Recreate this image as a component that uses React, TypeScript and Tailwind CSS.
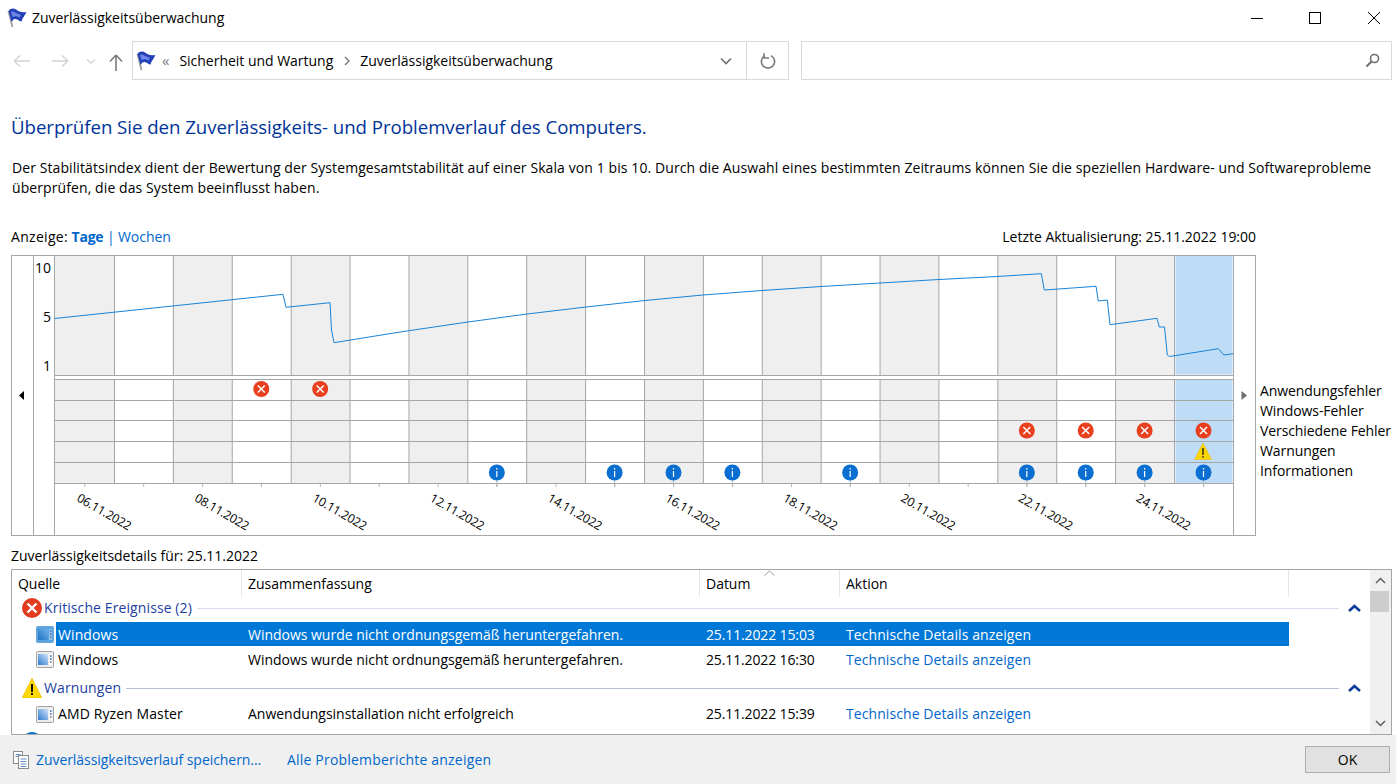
const font = "font-['Open_Sans','Liberation_Sans',sans-serif]";

const columnX = (i: number) => 55.6 + 58.89 * i;
const columns = Array.from({ length: 20 }, (_, i) => i);
const rowLines = [379.5, 400.5, 420.5, 441.5, 462.5, 483.5];
const dates = ["06", "08", "10", "12", "14", "16", "18", "20", "22", "24"];

const stability =
  "54.5,318.5 283,294.3 286,307.3 330,302.7 331.5,330 334,342.7 400,332 468,322 527,314 586,307 645,300.5 703,295 762,290.5 821,286.5 880,283 939,279.5 997,276.5 1041.3,273.7 1044.3,290 1096,286.3 1098.3,301 1107.3,300 1110,324.7 1157,318.3 1159.3,327 1164.5,327 1167.3,355 1169.5,356.5 1218.3,348.7 1224,355 1233,353.7";

const errorColumns: [number, number][] = [
  [3, 389],
  [4, 389],
  [16, 430.5],
  [17, 430.5],
  [18, 430.5],
  [19, 430.5],
];
const infoColumns = [7, 9, 10, 11, 13, 16, 17, 18, 19];

function ErrorDot({ cx, cy }: { cx: number; cy: number }) {
  return (
    <g>
      <circle cx={cx} cy={cy} r={8} fill="#e8401f" />
      <path
        d={`M${cx - 3.5} ${cy - 3.5}L${cx + 3.5} ${cy + 3.5}M${cx + 3.5} ${cy - 3.5}L${cx - 3.5} ${cy + 3.5}`}
        stroke="#fff"
        strokeWidth={1.5}
      />
    </g>
  );
}

function InfoDot({ cx, cy }: { cx: number; cy: number }) {
  return (
    <g>
      <line x1={cx} y1={cy} x2={cx} y2={487} stroke="#b8b8b8" />
      <circle cx={cx} cy={cy} r={8} fill="#0a6fd0" />
      <rect x={cx - 0.6} y={cy - 4.5} width={1.2} height={1.6} fill="#fff" />
      <rect x={cx - 0.6} y={cy - 1.5} width={1.2} height={6} fill="#fff" />
    </g>
  );
}

function Chart() {
  return (
    <svg
      width={1246}
      height={281}
      viewBox="11 255 1246 281"
      className="block shrink-0"
    >
      {columns.map((i) => (
        <g key={i}>
          {i === 19 ? (
            <>
              <rect x={columnX(i) + 1} y={256} width={57} height={118.5} fill="#bedcf5" />
              <rect x={columnX(i) + 1} y={380} width={57} height={103} fill="#bedcf5" />
            </>
          ) : i % 2 === 0 ? (
            <>
              <rect x={columnX(i) - (i === 0 ? 1 : 0)} y={256} width={58.89 + (i === 0 ? 1 : 0)} height={119} fill="#efefef" />
              <rect x={columnX(i) - (i === 0 ? 1 : 0)} y={380} width={58.89 + (i === 0 ? 1 : 0)} height={103} fill="#efefef" />
            </>
          ) : null}
        </g>
      ))}
      {columns.map((i) => (
        <g key={i} stroke="#a6a6a6">
          {i > 0 && <line x1={columnX(i)} y1={256} x2={columnX(i)} y2={375} />}
          {i > 0 && <line x1={columnX(i)} y1={380} x2={columnX(i)} y2={483} />}
          <line
            x1={columnX(i) + 29.2}
            y1={483}
            x2={columnX(i) + 29.2}
            y2={487}
            stroke="#b8b8b8"
          />
        </g>
      ))}
      <g stroke="#a6a6a6" fill="none">
        <rect x={11.5} y={255.5} width={1244} height={280} />
        <line x1={33.5} y1={255.5} x2={33.5} y2={535.5} />
        <line x1={54.5} y1={255.5} x2={54.5} y2={535.5} />
        <line x1={1233.5} y1={255.5} x2={1233.5} y2={535.5} />
        <line x1={54.5} y1={375.5} x2={1233.5} y2={375.5} />
        {rowLines.map((y) => (
          <line key={y} x1={54.5} y1={y} x2={1233.5} y2={y} />
        ))}
      </g>
      <polyline points={stability} fill="none" stroke="#1883d7" strokeWidth={1} />
      <g
        fill="#000"
        fontFamily="'Open Sans','Liberation Sans',sans-serif"
        fontSize={14}
        textAnchor="end"
      >
        <text x={51} y={272.5}>10</text>
        <text x={51} y={322}>5</text>
        <text x={51} y={371}>1</text>
      </g>
      <polygon points="24,391 19,395.5 24,400" fill="#000" />
      <polygon points="1241.5,391 1247,395.5 1241.5,400" fill="#6e6e6e" />
      {errorColumns.map(([i, cy]) => (
        <ErrorDot key={`${i}-${cy}`} cx={columnX(i) + 29} cy={cy} />
      ))}
      <polygon points="1203,443 1211.5,459.5 1194.5,459.5" fill="#ffd500" stroke="#e8b900" strokeWidth={0.5} />
      <rect x={1202.3} y={448} width={1.4} height={7} fill="#222" />
      <rect x={1202.3} y={456} width={1.4} height={1.5} fill="#222" />
      {infoColumns.map((i) => (
        <InfoDot key={i} cx={columnX(i) + 29} cy={472.5} />
      ))}
      {dates.map((d, i) => (
        <text
          key={d}
          transform={`translate(${76 + 117.7 * i} 500.5) rotate(30)`}
          fill="#000"
          fontFamily="'Open Sans','Liberation Sans',sans-serif"
          fontSize={12.2}
          letterSpacing={-0.2}
        >
          {d}.11.2022
        </text>
      ))}
    </svg>
  );
}

function FlagIcon() {
  return (
    <svg width={20} height={20} viewBox="0 0 20 20" className="shrink-0">
      <path d="M1.5 3L5.5 19" stroke="#a8a8a8" strokeWidth={2} />
      <path
        d="M1.5 3C3.5 0 7 0 9 1.5C11.5 3.5 15 5 19.5 4L17 8.5C15.8 9.5 15.2 11.5 14.5 13.5C12 13.5 10.5 10.5 8 11C6.5 11.2 5.5 12.5 4.5 14Z"
        fill="#2440b8"
      />
      <path d="M4 4C6 2.8 8 4.5 10 5.5C11.5 6.3 12.5 6.6 14 6.5L12.5 9.5C10.5 8.5 8.5 7.5 5.5 9Z" fill="#6f86e6" />
    </svg>
  );
}

function RowIcon({ selected }: { selected?: boolean }) {
  const id = selected ? "row-screen-selected" : "row-screen";
  return (
    <svg width={18} height={17} viewBox="0 0 18 17" className="shrink-0">
      <defs>
        <linearGradient id={id} x1="1" y1="0" x2="0" y2="1">
          <stop offset="0" stopColor={selected ? "#6fb0e6" : "#cfe3f7"} />
          <stop offset="1" stopColor={selected ? "#1d74c6" : "#2f7bd0"} />
        </linearGradient>
      </defs>
      <rect
        x={0.5}
        y={0.5}
        width={17}
        height={16}
        rx={1}
        fill={selected ? "#5aa3de" : "#ececec"}
        stroke={selected ? "#6aa8dc" : "#a3a3a3"}
      />
      <rect x={2} y={3} width={10} height={11} fill={`url(#${id})`} />
      <rect x={13} y={3} width={3} height={11} fill={selected ? "#8dc0ea" : "#fff"} />
      <rect x={14} y={4} width={1.5} height={2} fill="#4a84c4" />
      <rect x={14} y={7} width={1.5} height={2} fill="#4a84c4" />
      <rect x={14} y={10} width={1.5} height={2} fill="#8a8a8a" />
    </svg>
  );
}

function CollapseChevron() {
  return (
    <svg width={13} height={8} viewBox="0 0 13 8">
      <path d="M1 7L6.5 2L12 7" fill="none" stroke="#0b3c9c" strokeWidth={2.6} />
    </svg>
  );
}

function GroupRow({
  icon,
  label,
  lineColor,
  className,
}: {
  icon: React.ReactNode;
  label: string;
  lineColor: string;
  className: string;
}) {
  return (
    <div className={`flex items-center ${className}`}>
      <div className="w-[32px] shrink-0 pl-[10px]">{icon}</div>
      <span className="whitespace-nowrap tracking-[0.1px] text-[#1c3fa0]">{label}</span>
      <div className="flex min-w-0 flex-1 items-center pl-[5px] pr-px">
        <div className={`h-px flex-1 ${lineColor}`} />
      </div>
      <div className="flex w-[30px] shrink-0 justify-center pr-px">
        <CollapseChevron />
      </div>
    </div>
  );
}

function DetailRow({
  source,
  summary,
  date,
  selected,
  nudge,
  className,
}: {
  source: string;
  summary: string;
  date: string;
  selected?: boolean;
  nudge?: boolean;
  className: string;
}) {
  return (
    <div className={`flex h-[24px] items-center pl-[24px] ${className}`}>
      <RowIcon selected={selected} />
      <div
        className={`ml-[2px] flex h-full w-[1233px] shrink-0 items-center whitespace-nowrap ${
          nudge ? "pt-[2px]" : ""
        } ${selected ? "bg-[#0078d7] text-white" : "text-black"}`}
      >
        <div className="w-[186px] pl-[2px] tracking-[0.1px]">{source}</div>
        <div className="w-[458px] pl-[6px]">{summary}</div>
        <div className="w-[140px] pl-[6px] tracking-[-0.13px]">{date}</div>
        <div className={`pl-[6px] tracking-[0.08px] ${selected ? "text-white" : "text-[#0066cc]"}`}>
          Technische Details anzeigen
        </div>
      </div>
    </div>
  );
}

export default function App() {
  return (
    <div
      className={`flex h-screen w-full flex-col overflow-hidden bg-white text-[14px] leading-[20px] tracking-[-0.02px] text-black ${font}`}
    >
      <div className="flex h-[36px] items-center pl-[7px]">
        <FlagIcon />
        <span className="ml-[5px]">Zuverlässigkeitsüberwachung</span>
        <div className="ml-auto flex items-center gap-[46px] pr-[16px]">
          <div className="h-px w-[12px] bg-black" />
          <div className="h-[12px] w-[12px] border border-black" />
          <svg width={12} height={12} viewBox="0 0 12 12" className="ml-px">
            <path d="M0 0L12 12M12 0L0 12" stroke="#000" strokeWidth={1} />
          </svg>
        </div>
      </div>

      <div className="mt-[5px] flex h-[39px] items-center pr-[4px]">
        <div className="relative h-full w-[132px] shrink-0">
          <svg width={132} height={39} viewBox="0 0 132 39" className="block">
            <path d="M14 20H30M14 20L20 14.5M14 20L20 25.5" fill="none" stroke="#d4d4d4" strokeWidth={1.5} />
            <path d="M52 20H68M68 20L62 14.5M68 20L62 25.5" fill="none" stroke="#d4d4d4" strokeWidth={1.5} />
            <path d="M87 18.5L91 22L95 18.5" fill="none" stroke="#d4d4d4" strokeWidth={1.5} />
            <path d="M116 30V15M116 14L110 20.5M116 14L122 20.5" fill="none" stroke="#7a7a7a" strokeWidth={1.6} />
          </svg>
        </div>
        <div className="flex h-full w-[657px] shrink-0 items-center border border-[#d9d9d9] pl-[3px]">
          <FlagIcon />
          <span className="ml-[6px] text-[15px] leading-none text-[#7a7a7a]">«</span>
          <span className="ml-[10px] whitespace-nowrap">Sicherheit und Wartung</span>
          <svg width={8} height={10} viewBox="0 0 8 10" className="ml-[10px]">
            <path d="M2 1L6 5L2 9" fill="none" stroke="#7a7a7a" strokeWidth={1.4} />
          </svg>
          <span className="ml-[9px] whitespace-nowrap">Zuverlässigkeitsüberwachung</span>
          <svg width={12} height={8} viewBox="0 0 12 8" className="ml-auto mr-[14px]">
            <path d="M1 1.5L6 6.5L11 1.5" fill="none" stroke="#6e6e6e" strokeWidth={1.6} />
          </svg>
          <div className="flex h-full w-[42px] items-center justify-center border-l border-[#d9d9d9]">
            <svg width={16} height={16} viewBox="0 0 16 16">
              <path d="M5 2.6A6.6 6.6 0 1 0 11 2.6" fill="none" stroke="#7a7a7a" strokeWidth={1.6} />
              <path d="M4 0V5H9" fill="none" stroke="#7a7a7a" strokeWidth={1.4} />
            </svg>
          </div>
        </div>
        <div className="ml-[12px] flex h-full flex-1 items-center justify-end border border-[#d9d9d9] pr-[11px]">
          <svg width={15} height={15} viewBox="0 0 15 15">
            <circle cx={9.5} cy={5.5} r={4} fill="none" stroke="#6e6e6e" strokeWidth={1.6} />
            <path d="M6.5 8.5L1.5 13.5" stroke="#6e6e6e" strokeWidth={2} />
          </svg>
        </div>
      </div>

      <div className="flex flex-1 flex-col pl-[11px] pr-[4px]">
        <h1 className="mt-[34px] h-[26px] whitespace-nowrap text-[18.67px] font-normal leading-[26px] tracking-[-0.05px] text-[#003399]">
          Überprüfen Sie den Zuverlässigkeits- und Problemverlauf des Computers.
        </h1>
        <p className="mt-[18px] whitespace-nowrap pl-px tracking-[0.09px]">
          Der Stabilitätsindex dient der Bewertung der Systemgesamtstabilität auf einer Skala von 1 bis 10. Durch die
          Auswahl eines bestimmten Zeitraums können Sie die speziellen Hardware- und Softwareprobleme
          <br />
          überprüfen, die das System beeinflusst haben.
        </p>

        <div className="mt-[29px] flex h-[20px] w-[1245px] items-center justify-between">
          <div>
            <span className="tracking-[0.3px]">Anzeige:</span>{" "}
            <span className="font-bold tracking-[-0.25px] text-[#0066cc]">Tage</span>{" "}
            <span className="tracking-[-0.3px] text-[#0066cc]">|</span>{" "}
            <span className="text-[#0066cc]">Wochen</span>
          </div>
          <div>Letzte Aktualisierung: 25.11.2022 19:00</div>
        </div>

        <div className="mt-[8px] flex">
          <Chart />
          <ul className="ml-[3px] whitespace-nowrap pt-[126px] tracking-[-0.09px]">
            <li>Anwendungsfehler</li>
            <li>Windows-Fehler</li>
            <li>Verschiedene Fehler</li>
            <li>Warnungen</li>
            <li>Informationen</li>
          </ul>
        </div>

        <div className="mt-[10px] h-[20px]">Zuverlässigkeitsdetails für: 25.11.2022</div>

        <div className="mt-[3px] flex h-[166px] w-[1381px] overflow-hidden border border-[#a6a6a6]">
          <div className="min-w-0 flex-1">
            <div className="relative flex h-[27px] items-center whitespace-nowrap">
              <div className="flex h-full w-[230px] items-center border-r border-[#e5e5e5] pl-[6px]">Quelle</div>
              <div className="flex h-full w-[458px] items-center border-r border-[#e5e5e5] pl-[6px]">Zusammenfassung</div>
              <div className="flex h-full w-[140px] items-center border-r border-[#e5e5e5] pl-[6px]">Datum</div>
              <div className="flex h-full w-[449px] items-center border-r border-[#e5e5e5] pl-[6px]">Aktion</div>
              <svg width={11} height={6} viewBox="0 0 11 6" className="absolute left-[752px] top-0">
                <path d="M0.5 5.5L5.5 1L10.5 5.5" fill="none" stroke="#9a9a9a" />
              </svg>
            </div>

            <GroupRow
              className="h-[22px]"
              label="Kritische Ereignisse (2)"
              lineColor="bg-[#d5dcf2]"
              icon={
                <svg width={20} height={20} viewBox="0 0 20 20">
                  <circle cx={10} cy={10} r={10} fill="#e23b22" />
                  <path d="M5.5 5.5L14.5 14.5M14.5 5.5L5.5 14.5" stroke="#fff" strokeWidth={2.4} />
                </svg>
              }
            />
            <DetailRow
              className="mt-[3px]"
              selected
              nudge
              source="Windows"
              summary="Windows wurde nicht ordnungsgemäß heruntergefahren."
              date="25.11.2022 15:03"
            />
            <DetailRow
              className="mt-px"
              nudge
              source="Windows"
              summary="Windows wurde nicht ordnungsgemäß heruntergefahren."
              date="25.11.2022 16:30"
            />
            <GroupRow
              className="mt-[5px] h-[24px]"
              label="Warnungen"
              lineColor="bg-[#b4bedc]"
              icon={
                <svg width={20} height={20} viewBox="0 0 20 20">
                  <polygon points="10,0 20,20 0,20" fill="#ffd800" stroke="#e0b000" strokeWidth={0.5} />
                  <rect x={9} y={6} width={2} height={8} fill="#111" />
                  <rect x={9} y={15} width={2} height={2} fill="#111" />
                </svg>
              }
            />
            <DetailRow
              className="mt-[2px]"
              source="AMD Ryzen Master"
              summary="Anwendungsinstallation nicht erfolgreich"
              date="25.11.2022 15:39"
            />
            <div className="mt-[6px] pl-[10px]">
              <div className="h-[20px] w-[20px] rounded-full bg-[#0a6fd0]" />
            </div>
          </div>

          <div className="flex w-[21px] shrink-0 flex-col bg-[#f0f0f0]">
            <div className="flex h-[21px] items-center justify-center">
              <svg width={11} height={7} viewBox="0 0 11 7">
                <path d="M1 6L5.5 1.5L10 6" fill="none" stroke="#606060" strokeWidth={1.5} />
              </svg>
            </div>
            <div className="h-[21px] w-[19px] bg-[#cdcdcd]" />
            <div className="mt-auto flex h-[22px] items-center justify-center">
              <svg width={11} height={7} viewBox="0 0 11 7">
                <path d="M1 1L5.5 5.5L10 1" fill="none" stroke="#606060" strokeWidth={1.5} />
              </svg>
            </div>
          </div>
        </div>
      </div>

      <div className="flex h-[49px] shrink-0 items-center bg-[#f0f0f0] pl-[13px] pr-[6px] text-[#0066cc]">
        <svg width={16} height={18} viewBox="0 0 16 18" className="shrink-0">
          <rect x={0.5} y={0.5} width={9} height={12} fill="#fff" stroke="#8a8a8a" />
          <path d="M2.5 3.5H7.5M2.5 5.5H5" stroke="#5f8fc6" />
          <rect x={5.5} y={4.5} width={10} height={13} fill="#fff" stroke="#8a8a8a" />
          <path d="M7.5 8H13.5M7.5 10.5H13.5M7.5 13H13.5M7.5 15.5H13.5" stroke="#5f8fc6" />
        </svg>
        <span className="ml-[7px] w-[251px] whitespace-nowrap tracking-[-0.06px]">Zuverlässigkeitsverlauf speichern...</span>
        <span className="whitespace-nowrap tracking-[0.19px]">Alle Problemberichte anzeigen</span>
        <button className="ml-auto h-[27px] w-[85px] border border-[#adadad] bg-[#e1e1e1] text-black">OK</button>
      </div>
    </div>
  );
}
